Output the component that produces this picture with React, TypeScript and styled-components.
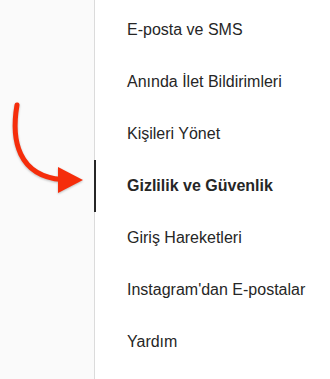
import React from 'react';
import styled, { createGlobalStyle } from 'styled-components';

const GlobalStyle = createGlobalStyle`
  html, body {
    margin: 0;
    padding: 0;
    background: #ffffff;
  }
  #root {
    height: 379px;
  }
`;

const Page = styled.div`
  display: flex;
  width: 330px;
  height: 379px;
  overflow: hidden;
  font-family: 'Liberation Sans', Arial, sans-serif;
  color: #262626;
`;

const Gutter = styled.div`
  position: relative;
  width: 94px;
  flex-shrink: 0;
  background: #fafafa;
`;

const Arrow = styled.svg`
  position: absolute;
  left: 0;
  top: 0;
  filter: drop-shadow(0 1px 1px rgba(0, 0, 0, 0.25));
`;

const Menu = styled.ul`
  flex: 1;
  margin: 0;
  padding: 4px 0 0;
  list-style: none;
  border-left: 1px solid #dbdbdb;
`;

const Item = styled.li<{ $active?: boolean }>`
  margin-left: -1px;
  height: 52px;
  display: flex;
  align-items: center;
  padding-left: 31px;
  border-left: 2px solid ${(p) => (p.$active ? '#262626' : 'transparent')};
  font-size: 16px;
  font-weight: ${(p) => (p.$active ? 600 : 400)};
  white-space: nowrap;
`;

const items = [
  'E-posta ve SMS',
  'Anında İlet Bildirimleri',
  'Kişileri Yönet',
  'Gizlilik ve Güvenlik',
  'Giriş Hareketleri',
  "Instagram'dan E-postalar",
  'Yardım',
];

const App: React.FC = () => {
  return (
    <Page>
      <GlobalStyle />
      <Gutter>
        <Arrow width="94" height="379" viewBox="0 0 94 379">
          <path
            d="M17 105 C 11 140, 18 176, 62 179.5"
            fill="none"
            stroke="#f52d0b"
            strokeWidth="5"
            strokeLinecap="round"
          />
          <polygon points="58,167 83,180 58,193" fill="#f52d0b" />
        </Arrow>
      </Gutter>
      <Menu>
        {items.map((label) => (
          <Item key={label} $active={label === 'Gizlilik ve Güvenlik'}>
            {label}
          </Item>
        ))}
      </Menu>
    </Page>
  );
};

export default App;
